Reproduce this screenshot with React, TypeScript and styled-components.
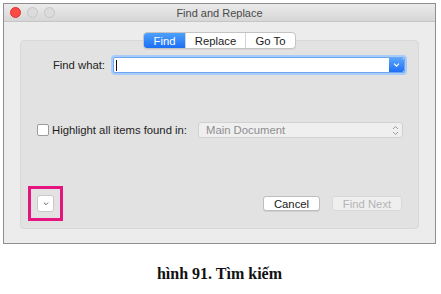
import React from "react";
import styled, { createGlobalStyle } from "styled-components";

const GlobalStyle = createGlobalStyle`
  html, body {
    margin: 0;
    padding: 0;
    background: #ffffff;
  }
  body {
    font-family: "Liberation Sans", Arial, sans-serif;
  }
`;

const Page = styled.div`
  width: 441px;
  height: 294px;
  padding: 3px 0 0 3px;
  box-sizing: border-box;
  display: flex;
  flex-direction: column;
`;

const Window = styled.div`
  width: 433px;
  height: 241px;
  box-sizing: border-box;
  border: 1px solid #8f8f8f;
  background: #ececec;
  display: flex;
  flex-direction: column;
`;

const TitleBar = styled.div`
  height: 18px;
  box-sizing: border-box;
  border-bottom: 1px solid #c6c6c6;
  background: linear-gradient(#ebebeb, #d6d6d6);
  display: flex;
  align-items: center;
  position: relative;
  padding-left: 6px;
`;

const Lights = styled.div`
  display: flex;
  gap: 6px;
`;

const Light = styled.span<{ $color: string; $edge: string }>`
  width: 11px;
  height: 11px;
  border-radius: 50%;
  box-sizing: border-box;
  background: ${(p) => p.$color};
  border: 1px solid ${(p) => p.$edge};
`;

const Title = styled.div`
  flex: 1;
  text-align: center;
  font-size: 11px;
  color: #4a4a4a;
  margin-right: 51px;
`;

const Panel = styled.div`
  margin: 18px 16px 14px 16px;
  flex: 1;
  border: 1px solid #d8d8d8;
  border-radius: 4px;
  background: #e2e2e2;
  display: flex;
  flex-direction: column;
`;

const Tabs = styled.div`
  align-self: center;
  margin-top: -9px;
  display: flex;
  height: 17px;
  box-sizing: border-box;
  border: 1px solid #c4c4c4;
  border-radius: 4px;
  background: #ffffff;
  overflow: hidden;
  box-shadow: 0 1px 0 rgba(0, 0, 0, 0.05);
`;

const Tab = styled.div<{ $active?: boolean; $w: number }>`
  width: ${(p) => p.$w}px;
  display: flex;
  align-items: center;
  justify-content: center;
  font-size: 11.3px;
  color: ${(p) => (p.$active ? "#ffffff" : "#1a1a1a")};
  background: ${(p) => (p.$active ? "linear-gradient(#4ea0fb, #1b6ff6)" : "transparent")};
  & + & {
    border-left: 1px solid #d4d4d4;
  }
`;

const FindRow = styled.div`
  display: flex;
  align-items: center;
  margin-top: 8px;
`;

const Label = styled.div<{ $w?: number }>`
  width: ${(p) => (p.$w ? `${p.$w}px` : "auto")};
  text-align: right;
  font-size: 11.3px;
  color: #1e1e1e;
`;

const Combo = styled.div`
  margin-left: 8px;
  width: 292px;
  height: 16px;
  box-sizing: border-box;
  border: 1px solid #6fa6f3;
  border-radius: 2px;
  box-shadow: 0 0 0 2px #a9cbf7;
  background: #ffffff;
  display: flex;
`;

const Field = styled.div`
  flex: 1;
  display: flex;
  align-items: center;
  padding-left: 2px;
`;

const Caret = styled.span`
  width: 1px;
  height: 11px;
  background: #111111;
`;

const DropButton = styled.div`
  width: 15px;
  background: linear-gradient(#5aa6fb, #1f6ff7);
  border-radius: 0 2px 2px 0;
  display: flex;
  align-items: center;
  justify-content: center;
`;

const HighlightRow = styled.div`
  display: flex;
  align-items: center;
  margin-top: 49px;
  padding: 0 15px 0 16px;
`;

const Check = styled.span`
  width: 12px;
  height: 12px;
  box-sizing: border-box;
  border: 1px solid #9b9b9b;
  border-radius: 2px;
  background: #ffffff;
  margin-right: 3px;
`;

const Select = styled.div`
  margin-left: auto;
  width: 205px;
  height: 16px;
  box-sizing: border-box;
  border: 1px solid #d2d2d2;
  border-radius: 3px;
  background: #efefef;
  display: flex;
  align-items: center;
  padding: 0 3px 0 7px;
  font-size: 11.3px;
  color: #8e8e8e;
`;

const Arrows = styled.svg`
  margin-left: auto;
`;

const BottomRow = styled.div`
  display: flex;
  align-items: center;
  margin-top: 48px;
  padding: 0 16px 0 7px;
  gap: 12px;
`;

const Highlight = styled.div`
  width: 35px;
  height: 35px;
  box-sizing: border-box;
  border: 3px solid #e5147f;
  display: flex;
  align-items: center;
  justify-content: center;
  margin-right: auto;
`;

const SmallButton = styled.div`
  width: 17px;
  height: 17px;
  box-sizing: border-box;
  border: 1px solid #c9c9c9;
  border-radius: 3px;
  background: #ffffff;
  display: flex;
  align-items: center;
  justify-content: center;
`;

const Button = styled.div<{ $w: number; $disabled?: boolean }>`
  width: ${(p) => p.$w}px;
  height: 15px;
  box-sizing: border-box;
  border: 1px solid ${(p) => (p.$disabled ? "#d8d8d8" : "#bdbdbd")};
  border-radius: 3px;
  background: ${(p) => (p.$disabled ? "#efefef" : "#ffffff")};
  color: ${(p) => (p.$disabled ? "#b4b4b4" : "#1a1a1a")};
  font-size: 11.3px;
  display: flex;
  align-items: center;
  justify-content: center;
  box-shadow: ${(p) => (p.$disabled ? "none" : "0 1px 0 rgba(0,0,0,0.08)")};
`;

const Caption = styled.div`
  margin-top: 21px;
  width: 433px;
  text-align: center;
  font-family: "Liberation Serif", "Times New Roman", serif;
  font-weight: bold;
  font-size: 16px;
  color: #111111;
`;

const Chevron = ({ color, size = 7 }: { color: string; size?: number }) => (
  <svg width={size} height={size * 0.6} viewBox="0 0 10 6">
    <polyline points="1.5,1 5,4.5 8.5,1" fill="none" stroke={color} strokeWidth="1.6" />
  </svg>
);

export default function App() {
  return (
    <Page>
      <GlobalStyle />
      <Window>
        <TitleBar>
          <Lights>
            <Light $color="#fc4a45" $edge="#e0332f" />
            <Light $color="#dcdcdc" $edge="#c6c6c6" />
            <Light $color="#dcdcdc" $edge="#c6c6c6" />
          </Lights>
          <Title>Find and Replace</Title>
        </TitleBar>
        <Panel>
          <Tabs>
            <Tab $active $w={41}>Find</Tab>
            <Tab $w={59}>Replace</Tab>
            <Tab $w={49}>Go To</Tab>
          </Tabs>
          <FindRow>
            <Label $w={84}>Find what:</Label>
            <Combo>
              <Field>
                <Caret />
              </Field>
              <DropButton>
                <Chevron color="#ffffff" size={7} />
              </DropButton>
            </Combo>
          </FindRow>
          <HighlightRow>
            <Check />
            <Label>Highlight all items found in:</Label>
            <Select>
              Main Document
              <Arrows width="7" height="11" viewBox="0 0 7 11">
                <polyline points="1,4 3.5,1.5 6,4" fill="none" stroke="#9a9a9a" strokeWidth="1" />
                <polyline points="1,7 3.5,9.5 6,7" fill="none" stroke="#9a9a9a" strokeWidth="1" />
              </Arrows>
            </Select>
          </HighlightRow>
          <BottomRow>
            <Highlight>
              <SmallButton>
                <Chevron color="#555555" size={6} />
              </SmallButton>
            </Highlight>
            <Button $w={57}>Cancel</Button>
            <Button $w={70} $disabled>
              Find Next
            </Button>
          </BottomRow>
        </Panel>
      </Window>
      <Caption>hình 91. Tìm kiếm</Caption>
    </Page>
  );
}
